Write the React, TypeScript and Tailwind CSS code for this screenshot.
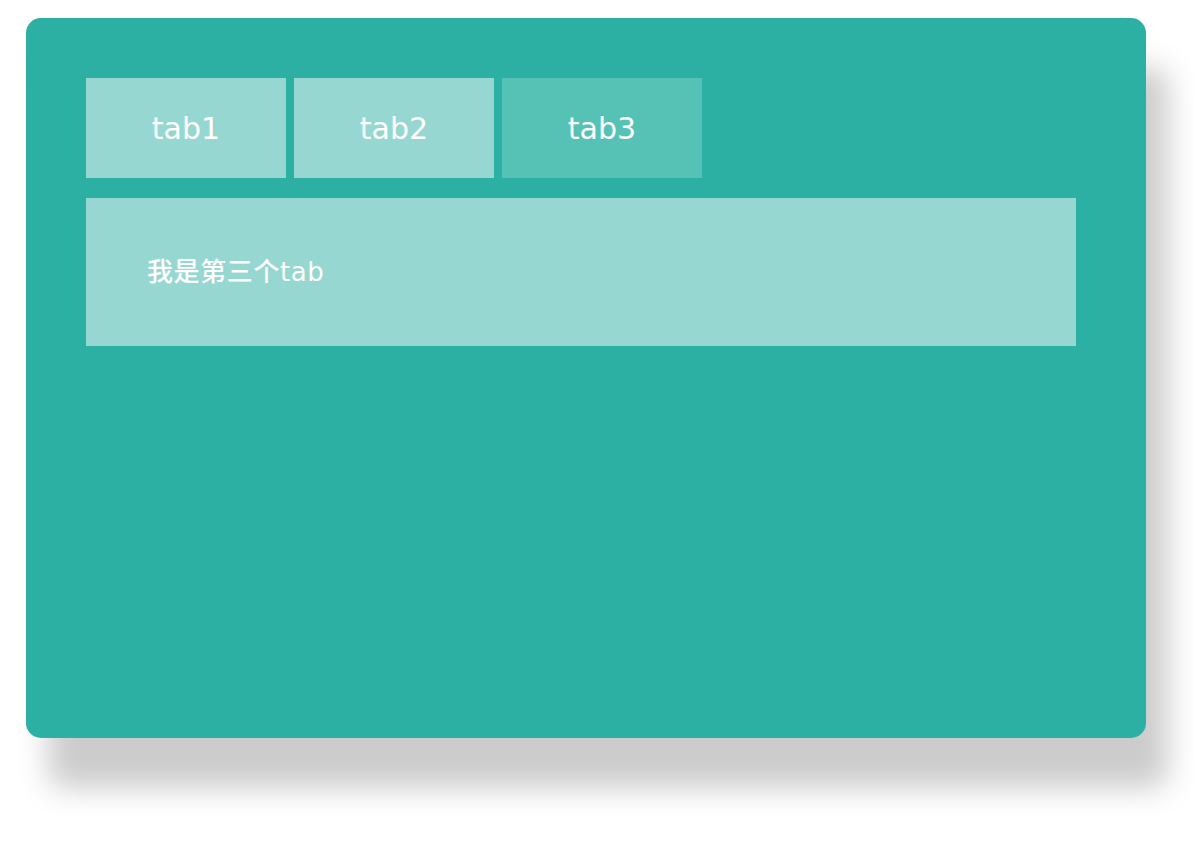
import {useState} from 'react';

const TABS = [
  {id: 'tab1', content: '我是第一个tab'},
  {id: 'tab2', content: '我是第二个tab'},
  {id: 'tab3', content: '我是第三个tab'},
];

export default function App() {
  const [active, setActive] = useState('tab3');
  const current = TABS.find((t) => t.id === active);

  return (
    <div
      className="min-h-screen bg-white pt-[18px] pl-[26px]"
      style={{fontFamily: '"DejaVu Sans", "Noto Sans CJK SC", sans-serif'}}
    >
      <div className="w-[1120px] h-[720px] rounded-[15px] bg-[#2cb0a3] p-[60px] shadow-[22px_50px_30px_#cccccc]">
        <div className="flex gap-2">
          {TABS.map((tab) => (
            <button
              key={tab.id}
              onClick={() => setActive(tab.id)}
              className={
                tab.id === active
                  ? 'w-[200px] h-[100px] flex items-center justify-center bg-[#56c1b5] text-white text-[30px]'
                  : 'w-[200px] h-[100px] flex items-center justify-center bg-[#96d8d1] text-white text-[30px]'
              }
            >
              {tab.id}
            </button>
          ))}
        </div>

        <div className="mt-5 w-[990px] h-[148px] bg-[#96d8d1] pl-[61px] flex items-center">
          <p className="text-white text-[26px] tracking-[0.6px] font-medium">{current?.content}</p>
        </div>
      </div>
    </div>
  );
}
